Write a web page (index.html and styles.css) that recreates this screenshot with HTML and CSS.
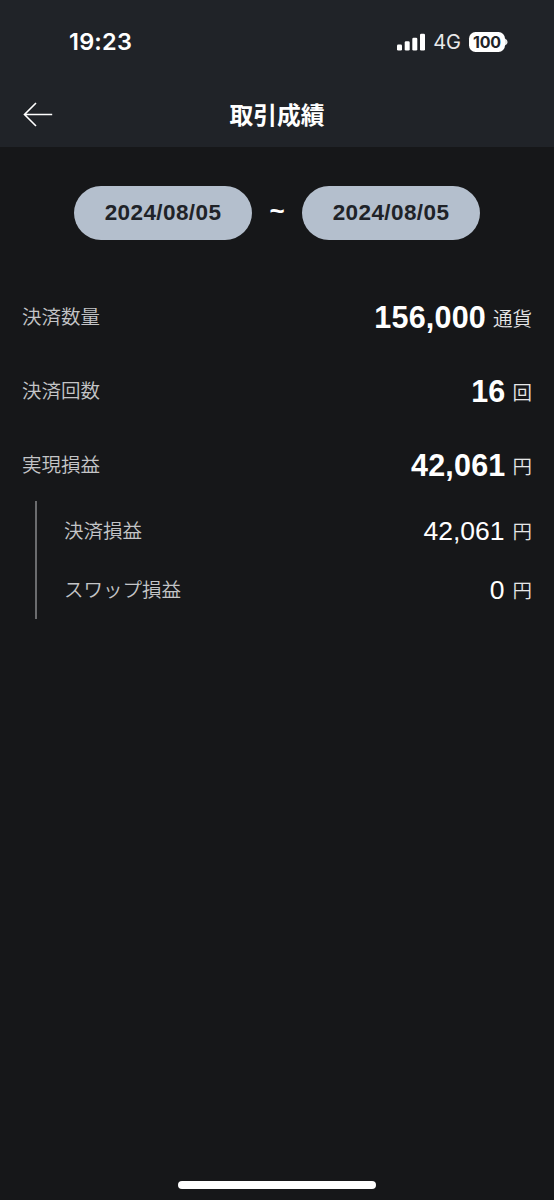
FILE: index.html
```html
<!DOCTYPE html>
<html lang="ja">
<head>
<meta charset="utf-8">
<title>取引成績</title>
<link rel="stylesheet" href="styles.css">
</head>
<body>
<div class="screen">
  <header class="top">
    <div class="status">
      <span class="clock">19:23</span>
      <div class="indicators">
        <svg class="signal" width="28" height="18" viewBox="0 0 28 18" fill="#fff">
          <rect x="0" y="11.5" width="5" height="6" rx="1.3"/>
          <rect x="7.7" y="8.3" width="5" height="9.2" rx="1.3"/>
          <rect x="15.3" y="4.8" width="5" height="12.7" rx="1.3"/>
          <rect x="23" y="0.8" width="5" height="16.7" rx="1.3"/>
        </svg>
        <span class="network">4G</span>
        <span class="battery">100</span>
        <svg class="battery-tip" width="3" height="8" viewBox="0 0 3 8"><path d="M0 .5Q2.6 1.5 2.6 4T0 7.5Z" fill="#e5e6e7"/></svg>
      </div>
    </div>
    <div class="nav">
      <svg class="back" width="30" height="26" viewBox="0 0 30 26" fill="none" stroke="#fff" stroke-width="1.6"><path d="M29.2 12.5H1.5M13 1L1.5 12.5L13 24"/></svg>
      <h1 class="title">取引成績</h1>
    </div>
  </header>
  <main class="content">
    <div class="range">
      <span class="date">2024/08/05</span>
      <span class="tilde">~</span>
      <span class="date">2024/08/05</span>
    </div>
    <div class="row"><span class="label">決済数量</span><span class="value"><b class="num">156,000</b><span class="unit">通貨</span></span></div>
    <div class="row"><span class="label">決済回数</span><span class="value"><b class="num">16</b><span class="unit">回</span></span></div>
    <div class="row"><span class="label">実現損益</span><span class="value"><b class="num">42,061</b><span class="unit">円</span></span></div>
    <div class="details">
      <div class="row sub"><span class="label">決済損益</span><span class="value"><span class="num">42,061</span><span class="unit">円</span></span></div>
      <div class="row sub"><span class="label">スワップ損益</span><span class="value"><span class="num">0</span><span class="unit">円</span></span></div>
    </div>
  </main>
  <div class="home"></div>
</div>
</body>
</html>
```
FILE: styles.css
```css
* { box-sizing: border-box; }
body { margin: 0; background: #161719; }
.screen {
  width: 554px; height: 1200px;
  display: flex; flex-direction: column;
  background: #161719; color: #fff;
  font-family: "Liberation Sans", "Noto Sans CJK JP", sans-serif;
}
.top { height: 147px; background: #202328; }
.status {
  height: 83px; padding: 0 46px 0 69px;
  display: flex; justify-content: space-between; align-items: center;
}
.clock { font: 600 23.5px/28px Inter, sans-serif; letter-spacing: .2px; }
.indicators { display: flex; align-items: center; }
.network { margin-left: 8px; font: 400 20px/24px Inter, sans-serif; color: #e9eaeb; }
.battery {
  width: 36px; height: 20px; margin-left: 8px; border-radius: 6.5px;
  background: #fff; color: #202328; text-align: center;
  font: 700 16px/20px Inter, sans-serif; letter-spacing: -.2px;
}
.battery-tip { margin-left: 0; }
.nav {
  height: 64px; padding: 0 23px;
  display: grid; grid-template-columns: 30px 1fr 30px; align-items: center;
}
.title {
  margin: 0 0 2px; text-align: center;
  font: 700 23.8px/32px "Noto Sans CJK JP", sans-serif;
}
.content { flex: 1; padding: 39px 22px 0; }
.range {
  height: 54px; margin-bottom: 50px;
  display: flex; justify-content: center; align-items: center;
}
.date {
  width: 178px; height: 54px; border-radius: 27px;
  background: #b4bfcd; color: #202328; text-align: center;
  font-size: 22.5px; font-weight: 700; line-height: 54px; letter-spacing: .4px;
}
.tilde { width: 50px; margin-bottom: 3px; text-align: center; font-size: 26px; font-weight: 700; }
.row {
  height: 54px; margin-bottom: 20px;
  display: flex; justify-content: space-between; align-items: center;
}
.label {
  margin-bottom: 2px; color: #c4c5c7;
  font: 350 19.5px/28px "Noto Sans CJK JP", sans-serif;
}
.value { padding-top: 5px; line-height: 40px; white-space: nowrap; }
.num { font-size: 30.5px; letter-spacing: .2px; }
.unit {
  margin-left: 7px; color: #e6e7e8; vertical-align: 2px;
  font: 350 19.5px/28px "Noto Sans CJK JP", sans-serif;
}
.details {
  height: 118px; margin: -11px 0 0 13px; padding-left: 27px;
  border-left: 2px solid #6b6c6e;
}
.sub { height: 59px; margin: 0; }
.sub .value { padding-top: 4px; }
.sub .num { font-size: 26.5px; letter-spacing: 0; }
.sub .unit { margin-left: 8px; vertical-align: 1px; }
.home { width: 198px; height: 8px; margin: 0 auto 11px; border-radius: 4px; background: #fff; }
```
